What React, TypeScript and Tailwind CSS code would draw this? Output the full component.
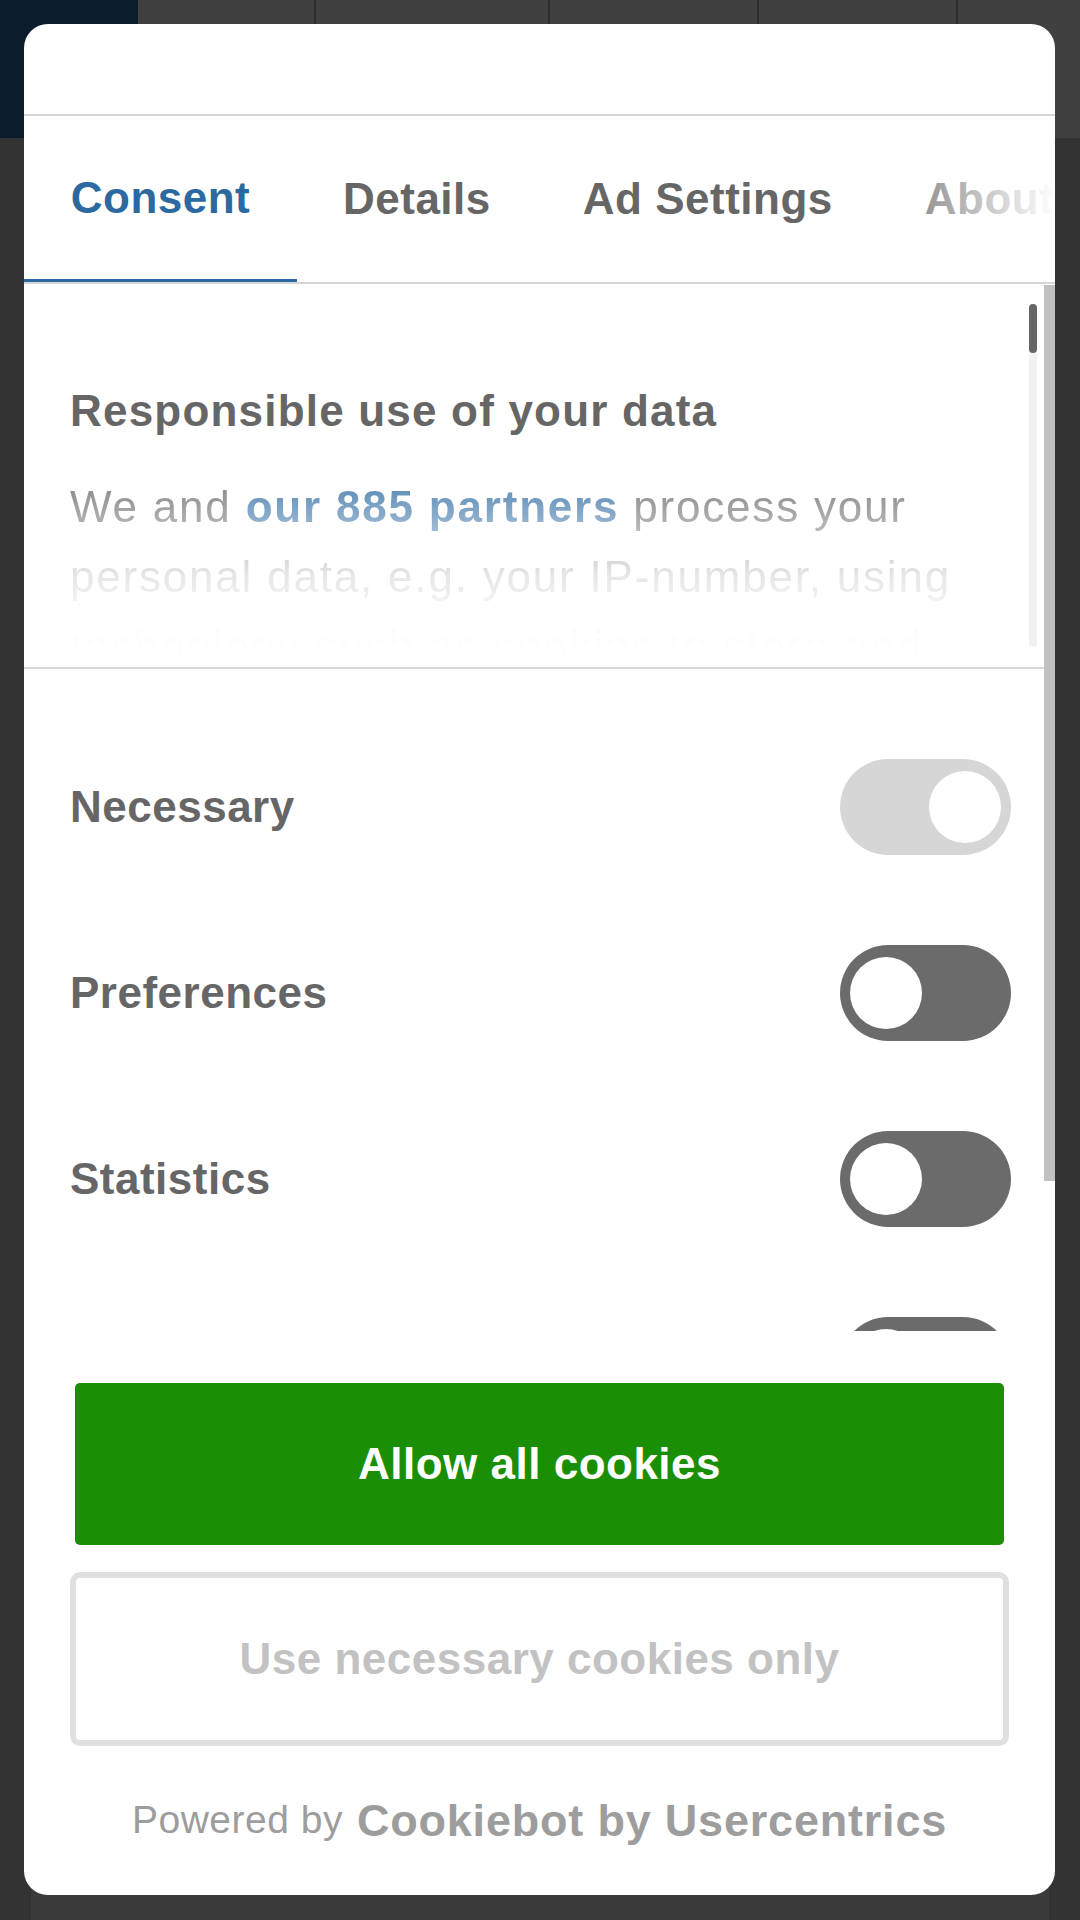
const font = "font-['Liberation_Sans',Arial,sans-serif]";

function Toggle({ on, locked }: { on: boolean; locked?: boolean }) {
  return (
    <div
      className={`flex h-[96px] w-[171px] flex-none items-center rounded-full px-[10px] ${
        on ? "justify-end" : "justify-start"
      } ${locked ? "bg-[#d6d6d6]" : "bg-[#6b6b6b]"}`}
    >
      <div className="h-[72px] w-[72px] rounded-full bg-white" />
    </div>
  );
}

const rows = [
  { label: "Necessary", on: true, locked: true },
  { label: "Preferences", on: false },
  { label: "Statistics", on: false },
  { label: "Marketing", on: false },
];

export default function App() {
  return (
    <div className={`relative h-[1920px] w-[1080px] overflow-hidden bg-[#333333] ${font}`}>
      {/* page behind the dialog */}
      <div className="flex h-[138px] bg-[#404040]">
        <div className="w-[138px] bg-[#0b1c2c]" />
        <div className="w-[178px] border-r-2 border-[#2e2e2e]" />
        <div className="w-[234px] border-r-2 border-[#2e2e2e]" />
        <div className="w-[209px] border-r-2 border-[#2e2e2e]" />
        <div className="w-[199px] border-r-2 border-[#2e2e2e]" />
        <div className="flex-1" />
      </div>
      <div className="mx-[31px] mt-[8px] h-[1774px] bg-[#3a3a3a]" />

      {/* dialog */}
      <div className="absolute left-[24px] top-[24px] flex h-[1871px] w-[1031px] flex-col overflow-hidden rounded-[24px] bg-white">
        <div className="h-[92px] flex-none border-b-2 border-[#d6d6d6]" />

        {/* tabs */}
        <div className="relative flex h-[168px] flex-none overflow-hidden whitespace-nowrap border-b-2 border-[#d6d6d6] text-[44px] font-bold tracking-[0.5px]">
          <div className="flex h-full w-[273px] flex-none items-center justify-center border-b-[3px] border-[#2c69a0] text-[#2c69a0]">
            Consent
          </div>
          <div className="flex h-full flex-none items-center px-[46px] text-[#666666]">Details</div>
          <div className="flex h-full flex-none items-center px-[46px] text-[#666666]">Ad Settings</div>
          <div className="flex h-full flex-none items-center px-[46px] text-[#666666]">About</div>
          <div className="absolute bottom-0 right-0 top-0 w-[190px] bg-linear-to-r from-white/0 to-white" />
        </div>

        {/* scrolling body */}
        <div className="flex h-[1047px] flex-none overflow-hidden">
          <div className="flex min-w-0 flex-1 flex-col">
            <div className="flex h-[385px] flex-none border-b-2 border-[#d6d6d6]">
              <div className="min-w-0 flex-1 overflow-hidden pl-[46px] pr-[19px] pt-[92px]">
                <h2 className="text-[44px] font-bold leading-[70px] tracking-[1.2px] text-[#666666]">
                  Responsible use of your data
                </h2>
                <p className="mt-[26px] text-[44px] leading-[70px] tracking-[1.8px] text-[#666666] [mask-image:linear-gradient(to_bottom,rgba(0,0,0,0.85)_0px,rgba(0,0,0,0.16)_103px,rgba(0,0,0,0.03)_150px,transparent_185px)]">
                  We and <span className="font-bold text-[#2c69a0]">our 885 partners</span> process your
                  personal data, e.g. your IP-number, using technology such as cookies to store and access
                  information on your device.
                </p>
              </div>
              <div className="my-[20px] mr-[7px] w-[8px] flex-none rounded-full bg-[#f1f1f1]">
                <div className="h-[49px] rounded-full bg-[#666666]" />
              </div>
            </div>

            <div className="flex flex-col gap-[90px] pl-[46px] pr-[33px] pt-[90px]">
              {rows.map((r) => (
                <div key={r.label} className="flex items-center justify-between">
                  <span className="text-[44px] font-bold tracking-[0.5px] text-[#666666]">{r.label}</span>
                  <Toggle on={r.on} locked={r.locked} />
                </div>
              ))}
            </div>
          </div>
          <div className="w-[11px] flex-none pt-[1px]">
            <div className="h-[896px] bg-[#c1c1c1]" />
          </div>
        </div>

        {/* buttons */}
        <div className="flex flex-col px-[46px] pt-[52px]">
          <button className="mx-[5px] flex h-[162px] items-center justify-center rounded-[5px] bg-[#1a8e04] text-[44px] font-bold tracking-[0.5px] text-white">
            Allow all cookies
          </button>
          <button className="mt-[27px] flex h-[174px] items-center justify-center rounded-[10px] border-[6px] border-[#e0e0e0] bg-white text-[44px] font-bold tracking-[0.5px] text-[#c2c2c2]">
            Use necessary cookies only
          </button>
        </div>

        <div className="flex h-[149px] items-center justify-center whitespace-nowrap text-[#9d9d9d]">
          <span className="text-[39px] tracking-[0.5px]">Powered by</span>
          <span className="ml-[14px] text-[45px] font-bold tracking-[0.8px]">Cookiebot by Usercentrics</span>
        </div>
      </div>
    </div>
  );
}
